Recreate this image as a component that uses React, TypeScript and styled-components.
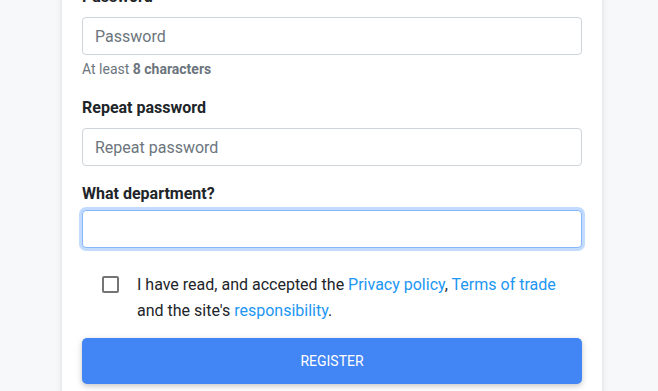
import React from "react";
import styled, { createGlobalStyle } from "styled-components";

const GlobalStyle = createGlobalStyle`
  html, body {
    margin: 0;
    padding: 0;
    background: #f7f8fa;
    font-family: Roboto, "Liberation Sans", Arial, sans-serif;
    color: #212529;
    overflow: hidden;
  }
  * {
    box-sizing: border-box;
  }
`;

const Page = styled.main`
  display: flex;
  padding-left: 62px;
`;

const Card = styled.form`
  width: 540px;
  margin-top: -35px;
  padding: 20px 20px 24px;
  background: #fff;
  box-shadow: 0 0 6px rgba(0, 0, 0, 0.12);
  display: flex;
  flex-direction: column;
`;

const Field = styled.div`
  display: flex;
  flex-direction: column;
  margin-bottom: 16px;
`;

const Label = styled.label<{ $tight?: boolean }>`
  font-size: 16px;
  font-weight: 700;
  line-height: 24px;
  margin-bottom: ${(p) => (p.$tight ? "4px" : "8px")};
`;

const Input = styled.input<{ $focused?: boolean }>`
  height: 38px;
  padding: 6px 12px;
  font-family: inherit;
  font-size: 16px;
  color: #212529;
  background: #fff;
  border: 1px solid ${(p) => (p.$focused ? "#86b7fe" : "#ced4da")};
  border-radius: 4px;
  outline: none;
  box-shadow: ${(p) => (p.$focused ? "0 0 0 3px rgba(13, 110, 253, 0.25)" : "none")};

  &::placeholder {
    color: #6c757d;
  }
`;

const Hint = styled.div`
  margin-top: 4px;
  font-size: 14px;
  line-height: 21px;
  color: #6c757d;

  b {
    font-weight: 700;
  }
`;

const ConsentRow = styled.div`
  display: flex;
  align-items: flex-start;
  gap: 18px;
  padding: 8px 20px 0;
  margin-bottom: 15px;
`;

const Check = styled.input.attrs({ type: "checkbox" })`
  appearance: none;
  flex: none;
  width: 17px;
  height: 17px;
  margin: 4px 0 0;
  border: 2px solid #757575;
  border-radius: 2px;
  background: #fff;
`;

const ConsentText = styled.p`
  margin: 0;
  font-size: 16px;
  line-height: 25.6px;
  color: #212529;
`;

const Link = styled.a`
  color: #2196f3;
  text-decoration: none;
`;

const SubmitButton = styled.button`
  height: 46px;
  border: none;
  border-radius: 5px;
  background: #4285f4;
  color: #fff;
  font-family: inherit;
  font-size: 14px;
  box-shadow: 0 2px 5px rgba(0, 0, 0, 0.16), 0 2px 10px rgba(0, 0, 0, 0.08);
  cursor: pointer;
`;

export default function App() {
  return (
    <>
      <GlobalStyle />
      <Page>
        <Card onSubmit={(e) => e.preventDefault()}>
          <Field>
            <Label htmlFor="password">Password</Label>
            <Input id="password" type="password" placeholder="Password" />
            <Hint>
              At least <b>8 characters</b>
            </Hint>
          </Field>
          <Field>
            <Label htmlFor="repeat">Repeat password</Label>
            <Input id="repeat" type="password" placeholder="Repeat password" />
          </Field>
          <Field>
            <Label htmlFor="department" $tight>
              What department?
            </Label>
            <Input id="department" type="text" $focused />
          </Field>
          <ConsentRow>
            <Check id="consent" />
            <ConsentText>
              I have read, and accepted the <Link href="#">Privacy policy</Link>,{" "}
              <Link href="#">Terms of trade</Link> and the site's{" "}
              <Link href="#">responsibility</Link>.
            </ConsentText>
          </ConsentRow>
          <SubmitButton type="submit">REGISTER</SubmitButton>
        </Card>
      </Page>
    </>
  );
}
